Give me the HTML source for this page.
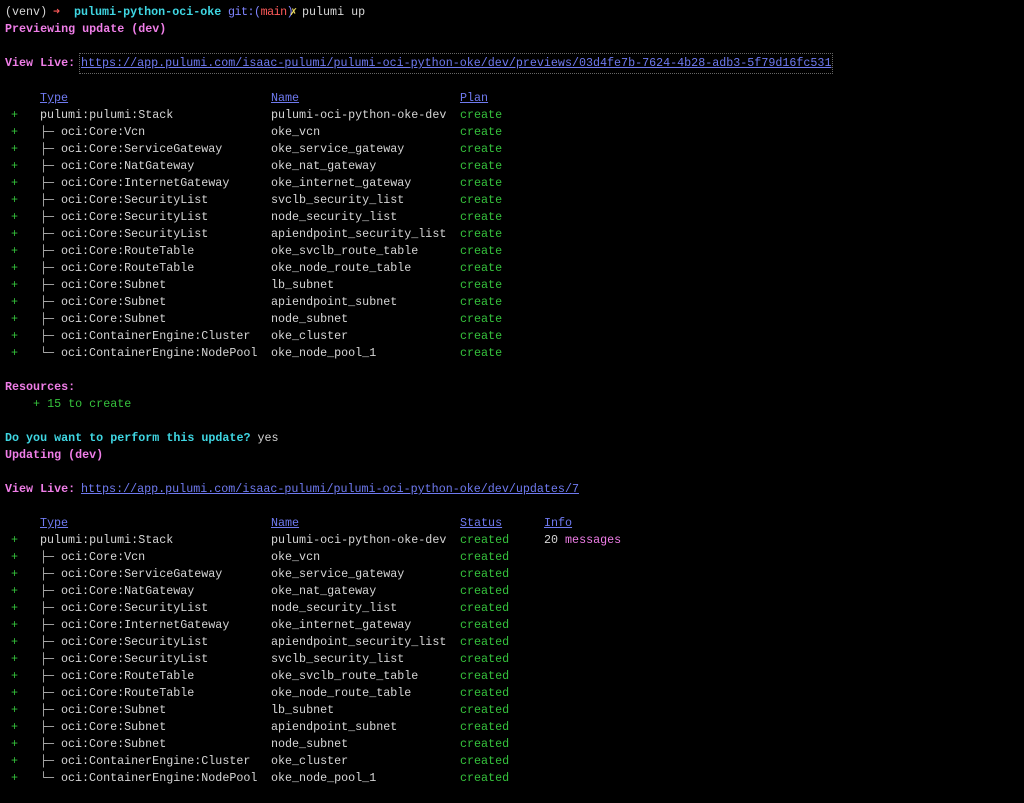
<!DOCTYPE html>
<html><head><meta charset="utf-8"><style>
html,body{margin:0;background:#000;width:1024px;height:803px;overflow:hidden}
body{position:relative;font-family:"Liberation Mono","DejaVu Sans Mono",monospace;font-size:11.7px;color:#d6d6d6}
.l{position:absolute;left:5px;height:17px;line-height:17px;white-space:pre;width:1015px}
.l span{position:absolute;top:0;white-space:pre}
.m{color:#f07ee8}.c{color:#3fd7e3}.g{color:#35c23c}.b{color:#7f84ff}.r{color:#ff5a5a}.y{color:#f0e060}
.u{color:#6f7af0;text-decoration:underline}
.bold{font-weight:bold}
</style></head><body>
<div class="l" style="top:4px">(venv) <span class="r" style="left:48px;position:absolute">➜</span><span style="left:69px" class="c bold">pulumi-python-oci-oke</span><span style="left:223px;letter-spacing:-0.5px" class="b">git:(<span class="r" style="position:static">main</span>)</span><span class="y" style="left:285px">✗</span><span style="left:297px">pulumi up</span></div>
<div class="l m bold" style="top:21px">Previewing update (dev)</div>
<div class="l m bold" style="top:55px">View Live: <span class="u" style="left:76px;font-weight:normal;outline:1px dotted #666;outline-offset:1px">https://app.pulumi.com/isaac-pulumi/pulumi-oci-python-oke/dev/previews/03d4fe7b-7624-4b28-adb3-5f79d16fc531</span></div>
<div id="a"></div>
<script>
function row(top,plus,tree,type,name,st,info){
 var h='<div class="l" style="top:'+top+'px">';
 if(plus)h+='<span class="g" style="left:6px">+</span>';
 if(tree)h+='<span style="left:35px;color:#bbb">'+tree+'─</span>';
 h+='<span style="left:'+(tree?56:35)+'px">'+type+'</span>';
 h+='<span style="left:266px">'+name+'</span>';
 h+='<span class="g" style="left:455px">'+st+'</span>';
 if(info)h+='<span style="left:539px">20 <span class="m" style="position:static">messages</span></span>';
 return h+'</div>';
}
var s='';
function hdr(top,st){
 var h='<div class="l" style="top:'+top+'px"><span class="u" style="left:35px">Type</span><span class="u" style="left:266px">Name</span><span class="u" style="left:455px">'+st+'</span>';
 if(st=='Status')h+='<span class="u" style="left:539px">Info</span>';
 return h+'</div>';
}
var p=[["Vcn","oke_vcn"],["ServiceGateway","oke_service_gateway"],["NatGateway","oke_nat_gateway"],["InternetGateway","oke_internet_gateway"],["SecurityList","svclb_security_list"],["SecurityList","node_security_list"],["SecurityList","apiendpoint_security_list"],["RouteTable","oke_svclb_route_table"],["RouteTable","oke_node_route_table"],["Subnet","lb_subnet"],["Subnet","apiendpoint_subnet"],["Subnet","node_subnet"],["ContainerEngine:Cluster","oke_cluster"],["ContainerEngine:NodePool","oke_node_pool_1"]];
var q=[["Vcn","oke_vcn"],["ServiceGateway","oke_service_gateway"],["NatGateway","oke_nat_gateway"],["SecurityList","node_security_list"],["InternetGateway","oke_internet_gateway"],["SecurityList","apiendpoint_security_list"],["SecurityList","svclb_security_list"],["RouteTable","oke_svclb_route_table"],["RouteTable","oke_node_route_table"],["Subnet","lb_subnet"],["Subnet","apiendpoint_subnet"],["Subnet","node_subnet"],["ContainerEngine:Cluster","oke_cluster"],["ContainerEngine:NodePool","oke_node_pool_1"]];
function T(i){return 5+17*i;}
s+=hdr(T(5),'Plan');
s+=row(T(6),1,'','pulumi:pulumi:Stack','pulumi-oci-python-oke-dev','create');
p.forEach(function(e,i){s+=row(T(7+i),1,i==13?'└':'├','oci:'+(e[0].indexOf('ContainerEngine')==0?'':'Core:')+e[0],e[1],'create');});
s+=hdr(T(30),'Status');
s+=row(T(31),1,'','pulumi:pulumi:Stack','pulumi-oci-python-oke-dev','created',1);
q.forEach(function(e,i){s+=row(T(32+i),1,i==13?'└':'├','oci:'+(e[0].indexOf('ContainerEngine')==0?'':'Core:')+e[0],e[1],'created');});
document.getElementById('a').innerHTML=s;
</script>
<div class="l m bold" style="top:379px">Resources:</div>
<div class="l g" style="top:396px">    + 15 to create</div>
<div class="l" style="top:430px"><b class="c">Do you want to perform this update?</b> yes</div>
<div class="l m bold" style="top:447px">Updating (dev)</div>
<div class="l m bold" style="top:481px">View Live: <span class="u" style="left:76px;font-weight:normal">https://app.pulumi.com/isaac-pulumi/pulumi-oci-python-oke/dev/updates/7</span></div>
</body></html>
